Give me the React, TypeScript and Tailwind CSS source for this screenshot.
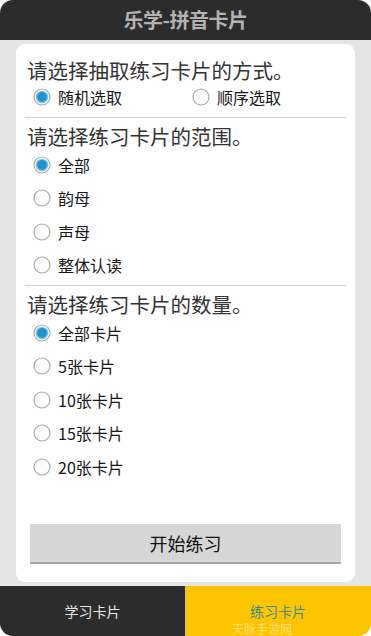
import { useState } from "react";

const font = { fontFamily: '"Noto Sans CJK SC", "Noto Sans", sans-serif' };

function Radio({ checked }: { checked: boolean }) {
  return (
    <svg width="18" height="18" viewBox="0 0 18 18" className="flex-shrink-0">
      <circle cx="9" cy="9" r="8" fill="#fdfdfd" stroke="#a9a9a9" strokeWidth="1.2" />
      {checked && (
        <circle cx="9" cy="9" r="5.6" fill="#1f95cf" stroke="#7cc3e6" strokeWidth="1.4" />
      )}
    </svg>
  );
}

function Option({
  label,
  checked,
  onClick,
}: {
  label: string;
  checked: boolean;
  onClick: () => void;
}) {
  return (
    <button onClick={onClick} className="flex items-center gap-[7px] text-left">
      <Radio checked={checked} />
      <span className="text-[16px] text-[#161616] leading-none">{label}</span>
    </button>
  );
}

export default function App() {
  const [mode, setMode] = useState("random");
  const [range, setRange] = useState("全部");
  const [count, setCount] = useState("全部卡片");

  const ranges = ["全部", "韵母", "声母", "整体认读"];
  const counts = ["全部卡片", "5张卡片", "10张卡片", "15张卡片", "20张卡片"];

  return (
    <div className="w-[371px] h-[636px] bg-white" style={font}>
      <div className="w-full h-full flex flex-col rounded-[13px] overflow-hidden">
        {/* Header */}
        <div className="h-[40px] bg-[#2c2c2c] flex items-center justify-center flex-shrink-0">
          <span className="text-[20px] font-bold text-[#b3b3b3] tracking-tight">乐学-拼音卡片</span>
        </div>

        {/* Body */}
        <div className="flex-1 bg-[#e5e5e5] px-4 py-1 flex">
          <div className="flex-1 bg-white rounded-[9px] px-[9px] flex flex-col">
            <div className="h-[24px] mt-[14px] pl-[2px] text-[20.5px] leading-[24px] text-[#333]">
              请选择抽取练习卡片的方式。
            </div>
            <div className="h-[30px] flex items-center pl-[8px]">
              <div className="w-[159px]">
                <Option label="随机选取" checked={mode === "random"} onClick={() => setMode("random")} />
              </div>
              <Option label="顺序选取" checked={mode === "order"} onClick={() => setMode("order")} />
            </div>
            <div className="h-px bg-[#cfcfcf] mt-[5px]" />

            <div className="h-[24px] mt-[6px] pl-[2px] text-[20.5px] leading-[24px] text-[#333]">
              请选择练习卡片的范围。
            </div>
            {ranges.map((r) => (
              <div key={r} className="h-[33.5px] flex items-center pl-[8px]">
                <Option label={r} checked={range === r} onClick={() => setRange(r)} />
              </div>
            ))}
            <div className="h-px bg-[#cfcfcf] mt-[3px]" />

            <div className="h-[24px] mt-[6px] pl-[2px] text-[20.5px] leading-[24px] text-[#333]">
              请选择练习卡片的数量。
            </div>
            {counts.map((c) => (
              <div key={c} className="h-[33.5px] flex items-center pl-[8px]">
                <Option label={c} checked={count === c} onClick={() => setCount(c)} />
              </div>
            ))}

            <button className="mt-auto mb-[18px] mx-[5px] h-[40px] bg-[#d6d6d6] border-b-2 border-[#a8a8a8] flex items-center justify-center text-[18px] text-[#111]">
              开始练习
            </button>
          </div>
        </div>

        {/* Tabs */}
        <div className="h-[50px] flex flex-shrink-0">
          <div className="w-[185px] bg-[#2c2c2c] flex items-center justify-center text-[14px] text-[#e6e6e6]">
            学习卡片
          </div>
          <div className="flex-1 bg-[#fdc500] flex items-center justify-center text-[14px] text-[#3b8c98] relative">
            练习卡片
            <span className="absolute left-[47px] bottom-0 text-[12px] leading-[14px] text-white/45">天脉手游网</span>
          </div>
        </div>
      </div>
    </div>
  );
}
